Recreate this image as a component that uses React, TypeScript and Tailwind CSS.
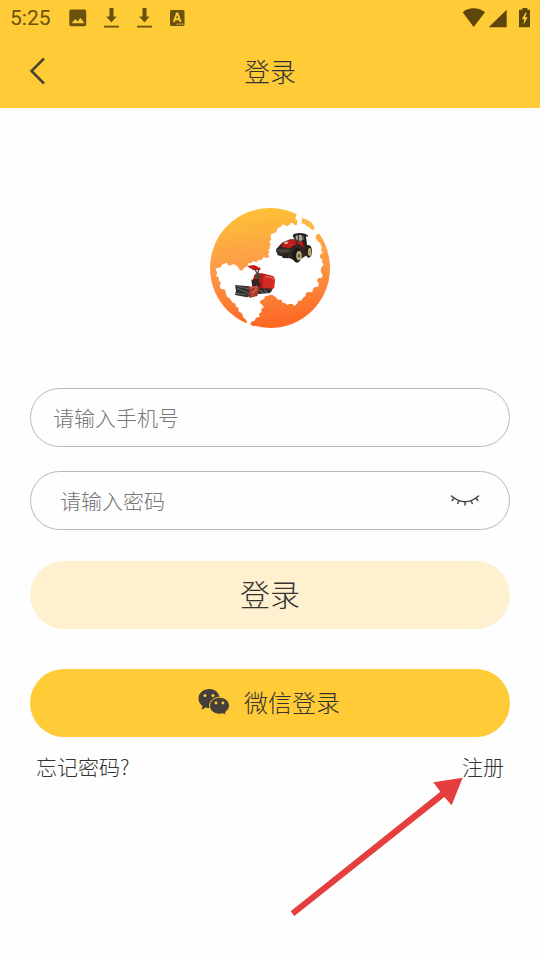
import { useState } from 'react';

function StatusBar() {
    return (
        <div className="flex h-9 items-center justify-between pl-2.5 pr-2 text-[#6a510c]">
            <div className="flex items-center">
                <span className="font-[Roboto,sans-serif] text-[21px] font-normal leading-6">5:25</span>
                <svg className="ml-[18px] h-[18px] w-[18px]" viewBox="0 0 18 18" fill="currentColor">
                    <path fillRule="evenodd" d="M2 .5h13.500a1.700 1.700 0 0 1 1.700 1.700v13.300a1.700 1.700 0 0 1-1.700 1.700H2a1.700 1.700 0 0 1-1.700-1.700V2.200A1.700 1.700 0 0 1 2 .5zM2.500 14.200h13l-4-5.500-2.900 3.700-2.300-2.400z" />
                </svg>
                <DownloadIcon />
                <DownloadIcon />
                <svg className="ml-4 h-4 w-4" viewBox="0 0 16 16">
                    <rect x="1" y="0" width="14.500" height="16" rx="1.500" fill="currentColor" />
                    <path d="M4.800 12L7.800 3.500h.8L11.600 12M6 9.200h4.400" fill="none" stroke="#ffcb37" strokeWidth="1.900" />
                    <path d="M7.800 14.200h1.400M10.300 14.200h1.400M12.800 14.200h1.400" stroke="#ffcb37" strokeWidth="1.300" />
                </svg>
            </div>
            <svg className="h-5 w-[70px] text-[#5c460a]" viewBox="66 22 210 60" fill="currentColor">
                <path d="M68 35Q82 23 101 23T135 35L101 79z" />
                <path d="M146 80L200 27V80z" />
                <path fillRule="evenodd" d="M247 22h15v5h8v53h-33V27h10zM256 36l-10 20h7l-3 17 13-23h-8l5-14z" />
            </svg>
        </div>
    );
}

function DownloadIcon() {
    return (
        <svg className="ml-4 h-5 w-[17px]" viewBox="0 0 17 20" fill="currentColor">
            <path d="M6.500 0h4v8.500h3L8.500 14.500 3.200 8.500h3.300zM1 17.800h15v1.600H1z" />
        </svg>
    );
}

function Logo() {
    return (
        <svg className="h-[120px] w-[120px]" viewBox="30 24 360 360" role="img" aria-label="logo">
            <defs>
                <linearGradient id="sun" x1="0" y1="0" x2="0.100" y2="1">
                    <stop offset="0" stopColor="#fdc536" />
                    <stop offset="0.500" stopColor="#fd9b48" />
                    <stop offset="1" stopColor="#fc6a26" />
                </linearGradient>
            </defs>
            <circle cx="210" cy="204" r="180" fill="url(#sun)" />
            <path
                fill="#fff"
                d="M46 207L53 203L62 202L68 193L80 188L84 195L92 197L96 193L107 194L114 201L120 211L126 212L132 204L142 198L145 190L153 189L159 184L170 186L176 180L186 179L191 170L198 174L209 171L204 163L208 156L204 150L211 145L208 139L213 134L208 125L214 118L211 108L215 101L224 99L230 94L233 84L242 82L245 75L254 74L260 79L268 75L273 68L281 71L284 76L291 74L292 61L286 58L289 44L306 40L303 52L328 60L350 84L362 98L349 104L347 113L351 121L361 131L366 143L363 150L368 158L359 165L360 173L368 180L365 187L371 193L363 205L362 215L368 225L366 233L354 234L351 242L356 250L355 260L343 262L338 269L337 277L325 276L318 279L316 289L309 293L305 301L294 303L291 311L284 318L277 312L269 311L262 315L256 310L247 308L245 299L234 299L227 291L217 285L209 284L204 288L196 288L192 297L181 302L179 307L192 321L184 326L184 337L177 341L179 350L168 353L164 362L153 366L150 384L143 384L139 360L129 352L127 341L115 333L116 325L107 319L107 311L98 308L90 296L81 290L77 279L76 269L62 266L59 257L63 248L56 242L56 232L48 228L52 218z"
            />
            <path d="M307 55L322 59L333 66L344 82L340 91L332 88L328 81L319 79L315 73L304 70z" fill="#fdb946" />
            <g strokeLinejoin="round">
                <path d="M228 148l18-20 24-10 17 4 2-15 10-7 17 2 5 32 8 6-3 22-20 13-19 7-22-9-32-7z" fill="#332622" />
                <path d="M245 132l14-8 17-7 20 2 12-5 10 9-2 15-9 2-10-9-15 5-12 9-24-4z" fill="#c51818" />
                <path d="M284 119l-6-12 4-6 16-2 17 2 8 5 1 5-6-2 2 26-7 3-5-14-17-1-1 13z" fill="#24221f" />
                <path d="M287 107l13-3 10 4 2 12-14 3-11-5z" fill="#a9a99e" />
                <path d="M295 104v24M308 106l3 30" stroke="#28201d" strokeWidth="3" />
                <path d="M253 127l13-3-5 9-8-2z" fill="#e9b5a0" />
                <path d="M229 148l20-5 28 4-2 12-19 7-27-9z" fill="#302b27" />
                <path d="M231 151l35-1M239 157l31-5M281 119l20 8M263 135l16-2" stroke="#766258" strokeWidth="2" />
                <ellipse cx="291" cy="166" rx="14" ry="22" fill="#1c1814" />
                <ellipse cx="297" cy="167" rx="8" ry="14" fill="#d2bd83" />
                <path d="M297 154v26M290 167h14M292 158l10 18M302 158l-10 18" stroke="#6b5b40" />
                <ellipse cx="297" cy="167" rx="3" ry="5" fill="#514432" />
                <ellipse cx="326" cy="154" rx="10" ry="19" fill="#282117" />
                <ellipse cx="329" cy="156" rx="5" ry="12" fill="#d4bc76" />
                <path d="M329 146v20M325 156h8" stroke="#6b5b40" />
                <path d="M245 164l22-3-2 14-17-1z" fill="#28251f" />
            </g>
            <g strokeLinejoin="round">
                <path d="M141 198l21-3 20 10-2 6-21-1z" fill="#c91d1d" />
                <path d="M164 207l10 18M176 209l-3 15" stroke="#474039" strokeWidth="4" />
                <path d="M159 238l4-14 20-5 36 9 5 6-4 32-18 9-38-9z" fill="#ba1c1c" />
                <path d="M190 228l29 2 6 10-2 23-33 3z" fill="#d52a24" />
                <path d="M165 222l11-4 9 14-17 6z" fill="#4b4540" />
                <path d="M195 229l23 4 4 8" fill="none" stroke="#ed7464" strokeWidth="3" />
                <path d="M154 239l21-3 8 24-9 5-17-3z" fill="#302722" />
                <path d="M172 264l36 2 10 3-8 10-34 3-10-7z" fill="#292a25" />
                <path d="M105 255l44 4 9 26-17 7-36-7 3-12z" fill="#30312f" />
                <path d="M106 257l42 10M111 265l37 15M108 280l33 4" stroke="#7c827b" strokeWidth="2" />
                <path d="M143 262l30-6 6 7-7 25-23 6-5-12 7-4z" fill="#a2362a" />
                <path d="M150 265l21-5-15 28M149 278l24-8" fill="none" stroke="#d96245" strokeWidth="3" />
                <path d="M180 270l11 10M193 269l9 10" stroke="#85827a" strokeWidth="3" />
            </g>
        </svg>
    );
}

function ClosedEye() {
    return (
        <svg className="h-4 w-[30px]" viewBox="0 0 30 16" fill="none" stroke="#444" strokeWidth="1.500" strokeLinecap="round">
            <path d="M1.500 3Q15 14.500 28.500 3M4 5L2.200 7.500M9 8L7.700 10.500M15 9V12M21 8l1.300 2.500M26 5L27.800 7.500" />
        </svg>
    );
}

function WechatIcon() {
    return (
        <svg className="h-[26px] w-8" viewBox="0 0 32 26">
            <path fill="#444039" d="M11.500 0C5.200 0 .5 4.200.5 9.500c0 3.200 1.500 5.600 4 7.400l-1 3.900 4.200-2.200 4 .7 3-.3C25 17 22.500 9 21.500 7.500 20.300 3 16.500 0 11.500 0z" />
            <path fill="#444039" stroke="#ffcb37" strokeWidth="1" d="M21.500 8.300c-5.600 0-9.900 3.700-9.900 8.400 0 4.800 4.300 8.500 9.900 8.500 1.200 0 2.400-.2 3.400-.5l3.400 1.500-.8-3.200c2.400-1.500 3.900-3.700 3.900-6.300 0-4.700-4.300-8.400-9.900-8.400z" />
            <g fill="#ffcb37">
                <circle cx="7" cy="6.500" r="1.500" />
                <circle cx="15" cy="6.500" r="1.500" />
                <circle cx="18" cy="14" r="1.400" />
                <circle cx="25" cy="14" r="1.400" />
            </g>
        </svg>
    );
}

const fieldClass =
    'flex h-[59px] items-center rounded-full border border-[#b8b8b8] pr-[29px] focus-within:border-[#ffcb37]';
const inputClass =
    'h-full min-w-0 flex-1 bg-transparent pb-0.5 text-[21px] font-light text-[#333] outline-none placeholder:text-[#777]';

export default function App() {
    const [phone, setPhone] = useState('');
    const [password, setPassword] = useState('');
    const [visible, setVisible] = useState(false);

    return (
        <div className="min-h-screen bg-[#fefefe] font-['Noto_Sans_CJK_SC',sans-serif] font-light text-[#333]">
            <header className="bg-[#ffcb37]">
                <StatusBar />
                <div className="grid h-[72px] grid-cols-[1fr_auto_1fr] items-center px-7 pb-0.5">
                    <button type="button" aria-label="返回" className="justify-self-start">
                        <svg className="h-7 w-5" viewBox="0 0 20 28" fill="none" stroke="#504732" strokeWidth="2.600">
                            <path d="M16 1.500L3.500 14L16 26.500" />
                        </svg>
                    </button>
                    <h1 className="text-[26px] leading-9">登录</h1>
                </div>
            </header>

            <main className="px-[30px] pt-[100px]">
                <div className="flex justify-center">
                    <Logo />
                </div>

                <form className="mt-[60px] flex flex-col" onSubmit={(e) => e.preventDefault()}>
                    <div className={`${fieldClass} pl-[22px]`}>
                        <input
                            type="tel"
                            aria-label="手机号"
                            placeholder="请输入手机号"
                            className={inputClass}
                            value={phone}
                            onChange={(e) => setPhone(e.target.value)}
                        />
                    </div>
                    <div className={`${fieldClass} mt-6 pl-[29px]`}>
                        <input
                            type={visible ? 'text' : 'password'}
                            aria-label="密码"
                            placeholder="请输入密码"
                            className={inputClass}
                            value={password}
                            onChange={(e) => setPassword(e.target.value)}
                        />
                        <button type="button" aria-label="显示密码" onClick={() => setVisible(!visible)}>
                            <ClosedEye />
                        </button>
                    </div>
                    <button type="submit" className="mt-[31px] h-[68px] rounded-full bg-[#fff0cf] pb-1 text-[30px]">
                        登录
                    </button>
                    <button
                        type="button"
                        className="mt-10 flex h-[68px] items-center justify-center gap-3.5 rounded-full bg-[#ffcb37] pb-0.5 pr-0.5 text-2xl"
                    >
                        <WechatIcon />
                        微信登录
                    </button>
                </form>

                <div className="relative mt-3.5 flex justify-between px-1.5 text-[21px] leading-[30px]">
                    <a href="#forgot">忘记密码?</a>
                    <a href="#register">注册</a>
                    <svg
                        className="pointer-events-none absolute right-[46px] top-[26px] h-[140px] w-[174px]"
                        viewBox="60 51 522 420"
                        fill="#e53e3f"
                        aria-hidden="true"
                    >
                        <path d="M578 53L490 67L511 95L62 454L73 468L523 111L545 136z" />
                    </svg>
                </div>
            </main>
        </div>
    );
}
